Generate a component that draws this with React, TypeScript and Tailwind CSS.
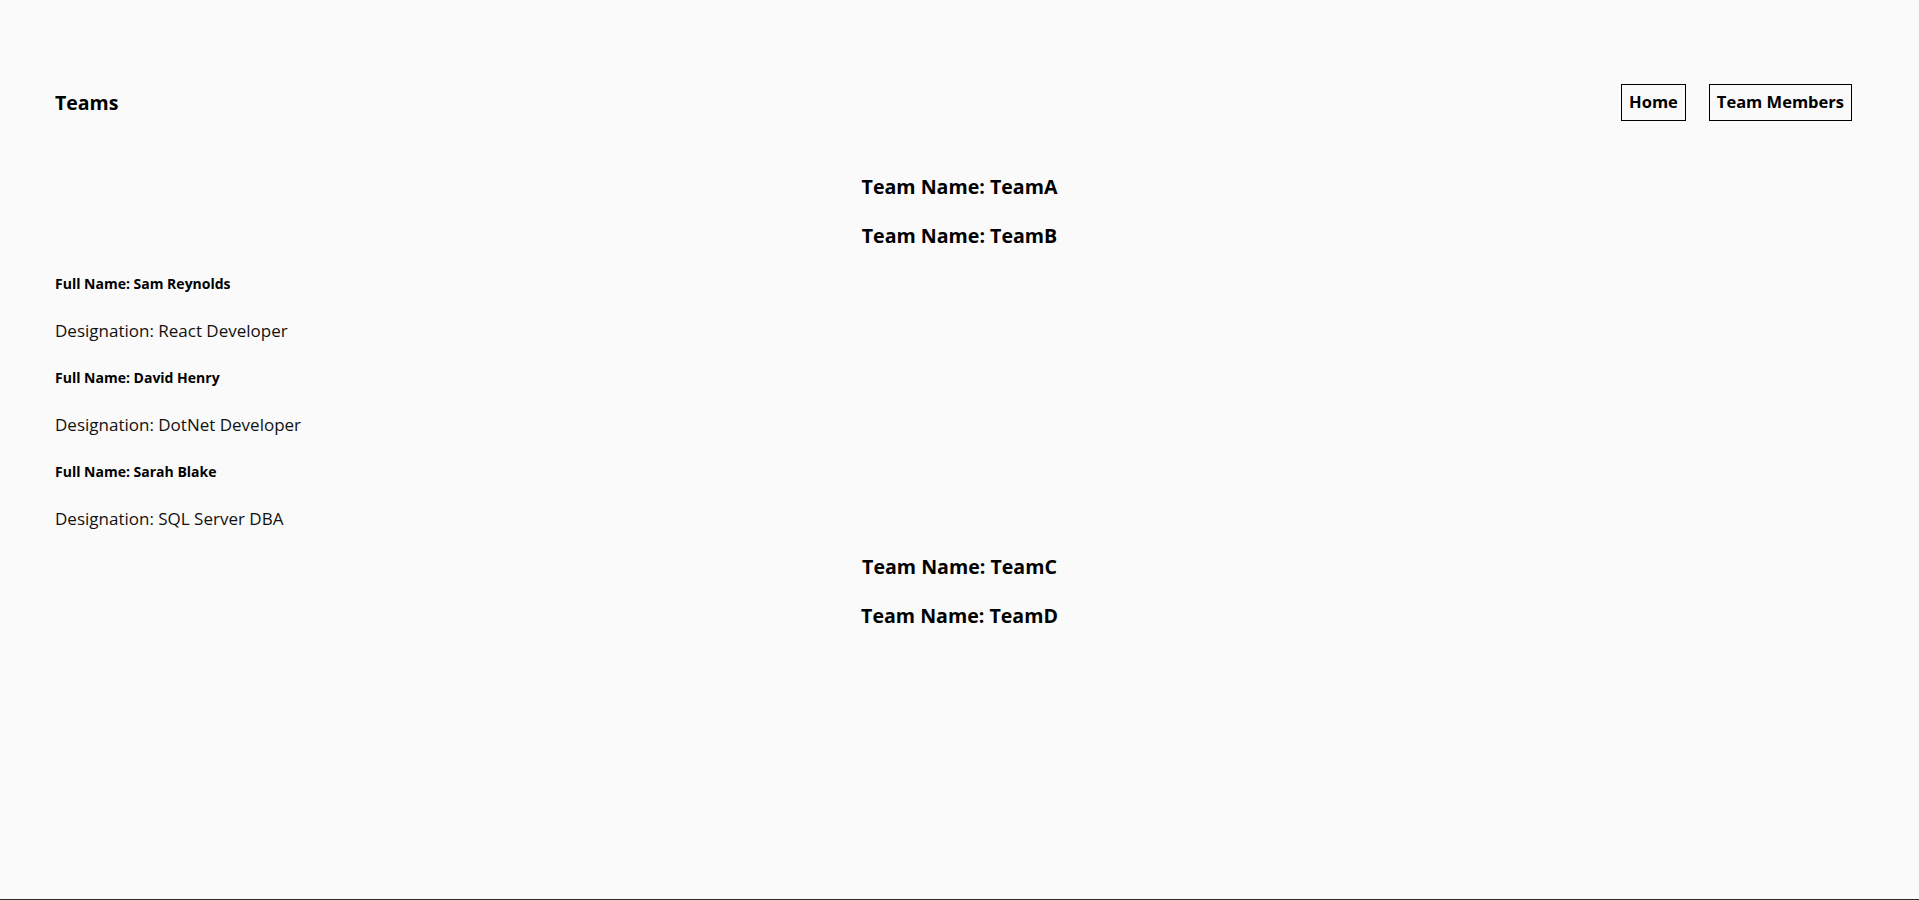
const teams = [
  { name: 'TeamA', members: [] as { fullName: string; designation: string }[] },
  {
    name: 'TeamB',
    members: [
      { fullName: 'Sam Reynolds', designation: 'React Developer' },
      { fullName: 'David Henry', designation: 'DotNet Developer' },
      { fullName: 'Sarah Blake', designation: 'SQL Server DBA' },
    ],
  },
  { name: 'TeamC', members: [] },
  { name: 'TeamD', members: [] },
];

export default function App() {
  return (
    <div className="min-h-[900px] flex flex-col bg-[#fafafa] text-black font-['Open_Sans',sans-serif]">
      <div className="flex-1 px-[55px] pt-[84px]">
        {/* Header */}
        <header className="h-[37px] pr-[12px] flex items-center justify-between">
          <h1 className="text-[19.5px] font-bold">Teams</h1>
          <nav className="flex items-center gap-[23px]">
            <a className="h-[37px] flex items-center px-[7px] border border-black text-[16.5px] font-bold">Home</a>
            <a className="h-[37px] flex items-center px-[7px] border border-black text-[16.5px] font-bold">Team Members</a>
          </nav>
        </header>

        {/* Teams list */}
        <main className="mt-[41px]">
          {teams.map((team) => (
            <section key={team.name}>
              <h3 className="text-[19.6px] leading-[49px] font-bold text-center">Team Name: {team.name}</h3>
              {team.members.map((m) => (
                <div key={m.fullName}>
                  <h5 className="text-[14px] leading-[48px] font-bold">Full Name: {m.fullName}</h5>
                  <p className="text-[17px] leading-[46px] text-[#111]">Designation: {m.designation}</p>
                </div>
              ))}
            </section>
          ))}
        </main>
      </div>
      <div className="h-px bg-[#2a2a2a]" />
    </div>
  );
}
